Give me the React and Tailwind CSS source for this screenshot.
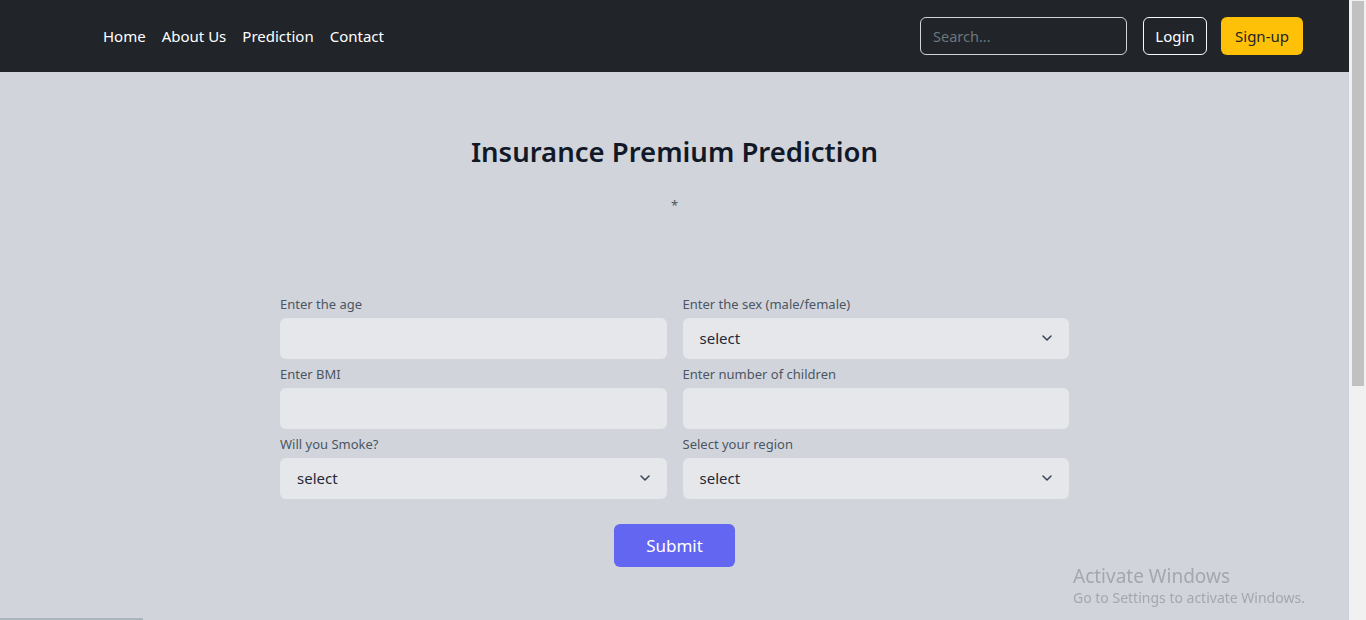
import { ChevronDown } from "lucide-react";

function Field({ label, select }) {
  return (
    <div className="flex flex-col">
      <label className="text-[13px] leading-5 mb-1 text-[#4b5563]">{label}</label>
      {select ? (
        <div className="h-[41px] rounded-md bg-[#e5e7eb] flex items-center justify-between pl-[17px] pr-[14px] text-[15px] text-[#1f2937]">
          <span>select</span>
          <ChevronDown size={16} strokeWidth={2.2} className="text-[#374151]" />
        </div>
      ) : (
        <input className="h-[41px] rounded-md bg-[#e5e7eb] px-4 outline-none" />
      )}
    </div>
  );
}

export default function App() {
  return (
    <div className="h-[620px] flex overflow-hidden bg-[#d1d5db] font-['Noto_Sans',sans-serif]">
      <div className="w-[1349px] shrink-0">
        <nav className="h-[72px] bg-[#212529] flex items-center pl-[95px] pr-[46px]">
          <ul className="flex text-white text-[15px]">
            <li className="px-2">Home</li>
            <li className="px-2">About Us</li>
            <li className="px-2">Prediction</li>
            <li className="px-2">Contact</li>
          </ul>
          <div className="ml-auto flex items-center">
            <input
              placeholder="Search..."
              className="w-[207px] h-[38px] rounded-md border border-[#ced4da] bg-transparent px-3 text-[14.5px] text-white placeholder:text-[#6c757d] outline-none"
            />
            <button className="ml-4 h-[38px] w-[64px] rounded-md border border-[#f8f9fa] text-white text-[15px]">Login</button>
            <button className="ml-[14px] h-[38px] w-[82px] rounded-md bg-[#ffc107] text-[#212529] text-[15px]">Sign-up</button>
          </div>
        </nav>

        <div className="flex flex-col items-center">
          <h1 className="mt-[58px] text-[27.5px] leading-[44px] font-semibold text-[#111827]">Insurance Premium Prediction</h1>
          <p className="mt-[22px] text-[13px] text-[#4b5563]">*</p>

          <form className="mt-[78px] w-[789px] grid grid-cols-2 gap-x-4 gap-y-[5px]">
            <Field label="Enter the age" />
            <Field label="Enter the sex (male/female)" select />
            <Field label="Enter BMI" />
            <Field label="Enter number of children" />
            <Field label="Will you Smoke?" select />
            <Field label="Select your region" select />
          </form>

          <button className="mt-[25px] w-[121px] h-[43px] rounded-md bg-[#6366f1] text-white text-[17px] pt-px">Submit</button>
        </div>
      </div>

      <div className="w-[17px] shrink-0 bg-[#f1f1f1] flex justify-center">
        <div className="mt-px w-[12px] h-[385px] bg-[#c1c1c1]" />
      </div>

      <div className="fixed left-[1073px] bottom-[12px] text-[#a3a7ae] pointer-events-none">
        <div className="text-[19px] leading-6">Activate Windows</div>
        <div className="text-[14px] leading-5">Go to Settings to activate Windows.</div>
      </div>
      <div className="fixed left-0 bottom-0 h-[2px] w-[143px] bg-[#a8b5ba]" />
    </div>
  );
}
